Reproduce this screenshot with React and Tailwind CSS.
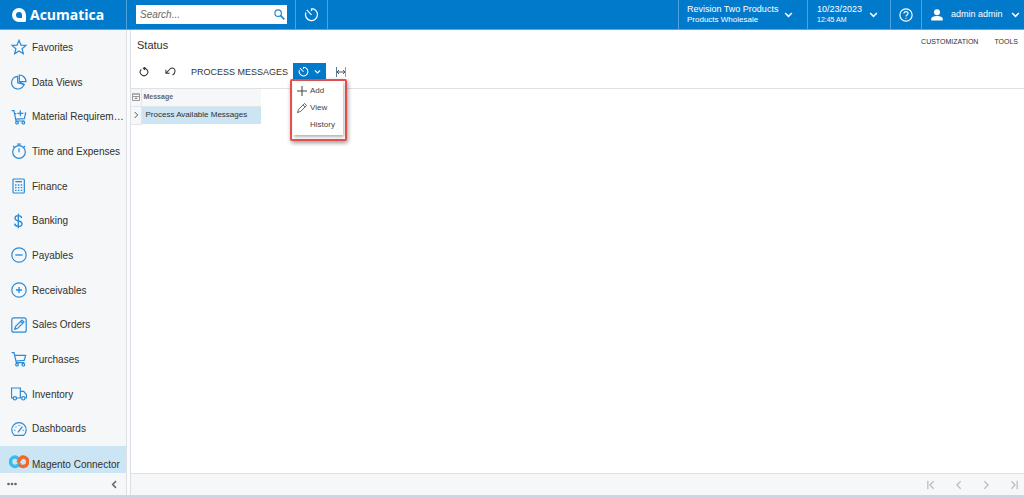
import { useState } from 'react'
import clsx from 'clsx'

function Icon({ size = 16, width = 1.5, className, children }) {
  return (
    <svg
      width={size}
      height={size}
      viewBox="0 0 24 24"
      fill="none"
      stroke="currentColor"
      strokeWidth={width}
      className={clsx('shrink-0', className)}
      aria-hidden="true"
    >
      {children}
    </svg>
  )
}

const clock = <path d="M4.5 4.5l7.5 8M12 2.5v4M12 2.5a9.6 9.6 0 1 1-9 6.2" />

const NAV = [
  { name: 'Favorites', icon: <path d="M12 2l2.9 7.1 7.6.5-5.9 4.9 1.9 7.5L12 17.9 5.5 22l1.9-7.5L1.5 9.6l7.6-.5z" /> },
  {
    name: 'Data Views',
    icon: (
      <>
        <path d="M10 3.500a9.500 9.500 0 1 0 9.500 12L10 13z" />
        <path d="M12.500 1.500a10 10 0 0 1 10 10h-10zM12.500 11.500l8 5" />
      </>
    ),
  },
  {
    name: 'Material Requirem…',
    icon: (
      <>
        <path d="M1 2.500h3.500L7.500 18H20M5.500 7H8M20.500 6h1.500l-2 8.500-12.500.8M14 2v9M9.500 6.500h9" />
        <circle cx="9" cy="20.500" r="2" />
        <circle cx="18.500" cy="20.500" r="2" />
      </>
    ),
  },
  {
    name: 'Time and Expenses',
    icon: (
      <>
        <circle cx="12" cy="13.500" r="9.500" />
        <path d="M12 8v6M9 1.500h6M12 1.500v3M18.500 7l2.500-2.500M5.500 7L3 4.500" />
      </>
    ),
  },
  {
    name: 'Finance',
    icon: (
      <>
        <rect x="3" y="1.500" width="17" height="21" rx="1.500" />
        <path d="M6.500 5.500h10" strokeWidth="2" />
        <path d="M6 10.500h11M6 14.500h11M6 18.500h11" strokeWidth="2" strokeDasharray="2.300 2" />
      </>
    ),
  },
  {
    name: 'Banking',
    icon: <path strokeWidth="2" d="M11 1v22M16 7.500C15.500 5 13.500 4 11 4 8 4 6 5.500 6 8c0 5.500 10.500 2.500 10.500 8 0 2.700-2.500 4-5.500 4s-5.300-1.500-5.500-4" />,
  },
  {
    name: 'Payables',
    icon: (
      <>
        <circle cx="12" cy="12" r="10.800" />
        <path d="M6.500 12h11" strokeWidth="2" />
      </>
    ),
  },
  {
    name: 'Receivables',
    icon: (
      <>
        <circle cx="12" cy="12" r="10.800" />
        <path d="M7.500 12h9M12 7.500v9" strokeWidth="2" />
      </>
    ),
  },
  {
    name: 'Sales Orders',
    icon: (
      <>
        <rect x="1.200" y="1.200" width="21.600" height="21.600" rx="3" />
        <path d="M5.500 18.500l1.500-4.500L16.500 4.500l3 3L10 17zM14.500 6.500l3 3" />
      </>
    ),
  },
  {
    name: 'Purchases',
    icon: (
      <>
        <path d="M1 2.500h3.500L8 17.500h12M6 6.500h16L19.800 14l-12.300 1" />
        <circle cx="9" cy="20.500" r="2" />
        <circle cx="18.500" cy="20.500" r="2" />
      </>
    ),
  },
  {
    name: 'Inventory',
    icon: (
      <>
        <path d="M3 18H.8V3H14v15H8M14 8h5l4.200 5V18h-2M14 18h2" />
        <circle cx="5.800" cy="18.500" r="2.500" />
        <circle cx="18.500" cy="18.500" r="2.500" />
      </>
    ),
  },
  {
    name: 'Dashboards',
    icon: (
      <>
        <path d="M5 21.500a10.800 10.800 0 1 1 14 0z" />
        <path d="M10.500 17L17 8.500" strokeWidth="2" />
        <path d="M5 14h1.500M7 8.500l1 1M12 6v1.500M19 14h-1.500" />
      </>
    ),
  },
]

function Chevron({ dir = 'down', size = 10, width = 3, bar = false, className }) {
  const paths = {
    down: 'M3 8l9 9 9-9',
    left: 'M16 3l-9 9 9 9',
    right: 'M8 3l9 9-9 9',
  }
  return (
    <Icon size={size} width={width} className={className}>
      <path d={paths[dir]} />
      {bar && <path d={dir === 'left' ? 'M2 2v20' : 'M22 2v20'} />}
    </Icon>
  )
}

function Header() {
  return (
    <header className="flex h-[30px] shrink-0 items-stretch border-b border-[#5ba8e0] bg-[#027acc] text-white">
      <a href="#home" className="flex w-[127px] shrink-0 items-center gap-1 border-r border-[#4da1dc] pl-3">
        <svg width="14" height="14" viewBox="0 0 28 28" className="shrink-0" aria-hidden="true">
          <path
            fill="currentColor"
            fillRule="evenodd"
            d="M14 0a14 14 0 0 1 14 14v11q0 3-3 3H14A14 14 0 0 1 14 0zM14 8a6 6 0 1 0 0 12h6v-6a6 6 0 0 0-6-6z"
          />
        </svg>
        <span className="font-['Open_Sans',sans-serif] text-[14px] leading-5 font-bold">Acumatica</span>
      </a>

      <form className="ml-[9px] flex items-center" onSubmit={e => e.preventDefault()}>
        <div className="flex h-[19px] w-[151px] items-center bg-white pr-[2px] pl-1">
          <input
            type="text"
            aria-label="Search"
            placeholder="Search..."
            className="min-w-0 flex-1 text-[10px] text-gray-800 italic outline-none placeholder:text-[#666]"
          />
          <button type="submit" aria-label="Run search" className="text-[#1c83cf]">
            <Icon size={11} width={2.5}>
              <circle cx="9" cy="9" r="7" />
              <path d="M14 14l8.500 8.500" strokeWidth="3.500" />
            </Icon>
          </button>
        </div>
      </form>
      <button aria-label="Business date" className="ml-2 flex w-[33px] items-center justify-center border-x border-[#4da1dc]">
        <Icon size={15} width={2}>{clock}</Icon>
      </button>

      <div className="ml-auto flex items-stretch">
        <button className="flex w-[129px] items-center justify-between border-l border-[#4da1dc] pr-[14px] pl-2 text-left">
          <span>
            <span className="block text-[9px] leading-[11px]">Revision Two Products</span>
            <span className="block text-[8px] leading-[10px]">Products Wholesale</span>
          </span>
          <Chevron size={9} width={4} />
        </button>
        <button className="flex w-[83px] items-center justify-between border-l border-[#4da1dc] pr-3 pl-[9px] text-left">
          <span>
            <span className="block text-[9px] leading-[11px]">10/23/2023</span>
            <span className="block text-[7px] leading-[10px]">12:45 AM</span>
          </span>
          <Chevron size={9} width={4} />
        </button>
        <button aria-label="Help" className="flex w-[31px] items-center justify-center border-l border-[#4da1dc]">
          <Icon size={14} width={2}>
            <circle cx="12" cy="12" r="10.500" />
            <path d="M8.500 9.500c0-4.500 7-4.500 7 0 0 2.500-3.500 2.500-3.500 5M12 16.500v2" />
          </Icon>
        </button>
        <button className="flex w-[103px] items-center border-l border-[#4da1dc] pl-2 text-[9px]">
          <svg width="14" height="12" viewBox="0 0 24 22" fill="currentColor" className="shrink-0" aria-hidden="true">
            <circle cx="12" cy="6" r="5.500" />
            <path d="M1.500 21v-3c0-3.500 6-5 10.500-5s10.500 1.500 10.500 5v3z" />
          </svg>
          <span className="ml-[7px]">admin admin</span>
          <Chevron size={9} width={4} className="ml-2" />
        </button>
      </div>
    </header>
  )
}

function Sidebar() {
  return (
    <aside className="flex w-[127px] shrink-0 flex-col border-r border-[#dcdfe3] bg-[#f5f7f9]">
      <nav className="flex min-h-0 flex-1 flex-col text-[10px] text-[#303030]">
        {NAV.map(item => (
          <a key={item.name} href="#nav" className="flex flex-1 items-center pl-[11px] hover:bg-[#cde6f5]">
            <Icon className="text-[#2b8ad6]" width={1.8}>{item.icon}</Icon>
            <span className="ml-[5px] whitespace-nowrap">{item.name}</span>
          </a>
        ))}
        <a href="#nav" className="flex h-[27px] items-end bg-[#cbe5f4] pb-px pl-[9px]">
          <svg width="20" height="14" viewBox="0 0 40 28" fill="none" strokeWidth="7" className="mb-[3px] shrink-0" aria-hidden="true">
            <path stroke="#35bdf0" d="M19 8C17 5.500 15 4 12.500 4a9 9 0 1 0 0 19c5 0 7.500-4 9.500-7.500" />
            <path stroke="#f2672a" d="M18 15.500C20.500 10 22.500 4 28 4a9 9 0 1 1 0 19c-3.500 0-6-1.500-8-4" />
          </svg>
          <span className="ml-[3px] whitespace-nowrap">Magento Connector</span>
        </a>
      </nav>
      <div className="flex h-[22px] shrink-0 items-center justify-between px-[7px] text-[#666]">
        <button aria-label="More items">
          <svg width="10" height="4" viewBox="0 0 10 4" fill="currentColor" aria-hidden="true">
            <circle cx="1.500" cy="2" r="1.300" />
            <circle cx="5" cy="2" r="1.300" />
            <circle cx="8.500" cy="2" r="1.300" />
          </svg>
        </button>
        <button aria-label="Collapse menu">
          <Chevron dir="left" size={9} width={4} />
        </button>
      </div>
    </aside>
  )
}

function Toolbar() {
  const [open, setOpen] = useState(true)

  return (
    <div className="flex h-[26px] items-start border-b border-[#dfe1e4] text-[#333]">
      <button aria-label="Refresh" className="ml-[7px] flex h-[17px] w-3 items-center justify-center">
        <Icon size={10} width={2.5}>
          <path d="M5.500 5.500a9 9 0 1 0 13 0M18.500 5.500C17 4 14 3 11 3M15 0l-4.500 3.200L14.500 7" />
        </Icon>
      </button>
      <button aria-label="Undo" className="ml-[14px] flex h-[17px] w-3 items-center justify-center">
        <Icon size={11} width={2.2}>
          <path d="M2 8v8h8M2 16L11 6.500c4-4 11-1.500 11 4.500 0 4-2.500 7-5.500 8.500" />
        </Icon>
      </button>
      <button className="ml-[15px] h-[17px] text-[9px] leading-4 whitespace-nowrap">PROCESS MESSAGES</button>
      <div className="relative ml-[5px]">
        <button
          aria-label="Schedules"
          aria-expanded={open}
          onClick={() => setOpen(!open)}
          className="flex h-[17px] w-[33px] items-center justify-between bg-[#027acc] px-[5px] text-white"
        >
          <Icon size={11} width={2.2}>{clock}</Icon>
          <Chevron size={7} width={4} />
        </button>
        {open && (
          <div className="absolute top-4 -left-[3px] z-10 rounded-xs border-2 border-[#e5504f] bg-white pr-[2px] pb-1 pl-px shadow-[1px_2px_4px_rgba(0,0,0,0.4)]">
            <div role="menu" className="w-[50px] bg-white pt-px pb-px text-[8px] text-[#444] shadow-[1px_2px_3px_rgba(0,0,0,0.3)]">
              <button role="menuitem" className="flex h-[17px] w-full items-center gap-[3px] pl-1">
                <Icon size={10} width={2.5}><path d="M12 0v24M0 12h24" /></Icon>
                Add
              </button>
              <button role="menuitem" className="flex h-[17px] w-full items-center gap-[3px] pl-1">
                <Icon size={10} width={2}><path d="M1 23l3-8L18 1l5 5L9 20zM14.500 4.500l5 5" /></Icon>
                View
              </button>
              <button role="menuitem" className="flex h-[18px] w-full items-center pl-[17px]">History</button>
            </div>
          </div>
        )}
      </div>
      <button aria-label="Fit columns" className="ml-[9px] flex h-[17px] items-center">
        <svg width="12" height="10" viewBox="0 0 12 10" fill="none" aria-hidden="true">
          <path stroke="#5a7d93" d="M1.500 0v10" />
          <path stroke="#c59a55" d="M10.500 0v10" />
          <path stroke="#555" d="M2 5h8M4 3L2 5l2 2M8 3l2 2-2 2" />
        </svg>
      </button>
    </div>
  )
}

export default function App() {
  return (
    <div className="flex h-screen flex-col bg-white font-['Liberation_Sans',Arial,sans-serif] text-[#303030]">
      <Header />
      <div className="flex min-h-0 flex-1 gap-[3px] bg-[#fbfcfd]">
        <Sidebar />
        <main className="flex min-w-0 flex-1 flex-col border-l border-[#dcdfe3] bg-white">
          <div className="flex h-[33px] shrink-0 items-start justify-between px-[6px]">
            <h1 className="pt-[7px] text-[11px] leading-4">Status</h1>
            <div className="flex gap-4 pt-1 text-[7px] leading-4">
              <button>CUSTOMIZATION</button>
              <button>TOOLS</button>
            </div>
          </div>
          <Toolbar />

          <div className="min-h-0 flex-1">
            <table className="w-[130px] table-fixed border-collapse text-left text-[8px]">
              <thead>
                <tr className="h-[17px] border-b border-[#e3e6e9] bg-[#f5f7f9] text-[#666]">
                  <th className="w-[10px] border-r border-[#e3e6e9] p-0" aria-label="Settings">
                    <svg width="8" height="8" viewBox="0 0 8 8" fill="none" stroke="#999" className="ml-px" aria-hidden="true">
                      <path d="M.5 1v6.500h7V1zM0 1h8M1 3.500h6M2.500 5.500h3M4 3v3" />
                    </svg>
                  </th>
                  <th className="p-0 pl-[2px] text-[7px] font-bold">Message</th>
                </tr>
              </thead>
              <tbody>
                <tr className="h-[18px]">
                  <td className="border-r border-b border-[#e3e6e9] bg-[#f5f7f9] p-0 text-[#555]">
                    <Chevron dir="right" size={8} width={3} className="ml-px" />
                  </td>
                  <td className="bg-[#cbe5f4] p-0 pl-1 whitespace-nowrap">Process Available Messages</td>
                </tr>
              </tbody>
            </table>
          </div>

          <footer className="flex h-[22px] shrink-0 items-center justify-end gap-[17px] border-t border-[#dcdfe3] bg-[#f5f7f9] pr-[6px] text-[#b9bdc2]">
            <button disabled aria-label="First page"><Chevron dir="left" size={10} bar /></button>
            <button disabled aria-label="Previous page"><Chevron dir="left" size={10} /></button>
            <button disabled aria-label="Next page"><Chevron dir="right" size={10} /></button>
            <button disabled aria-label="Last page"><Chevron dir="right" size={10} bar /></button>
          </footer>
        </main>
      </div>
      <div className="h-[2px] shrink-0 bg-[#cbd7e6]" />
    </div>
  )
}
